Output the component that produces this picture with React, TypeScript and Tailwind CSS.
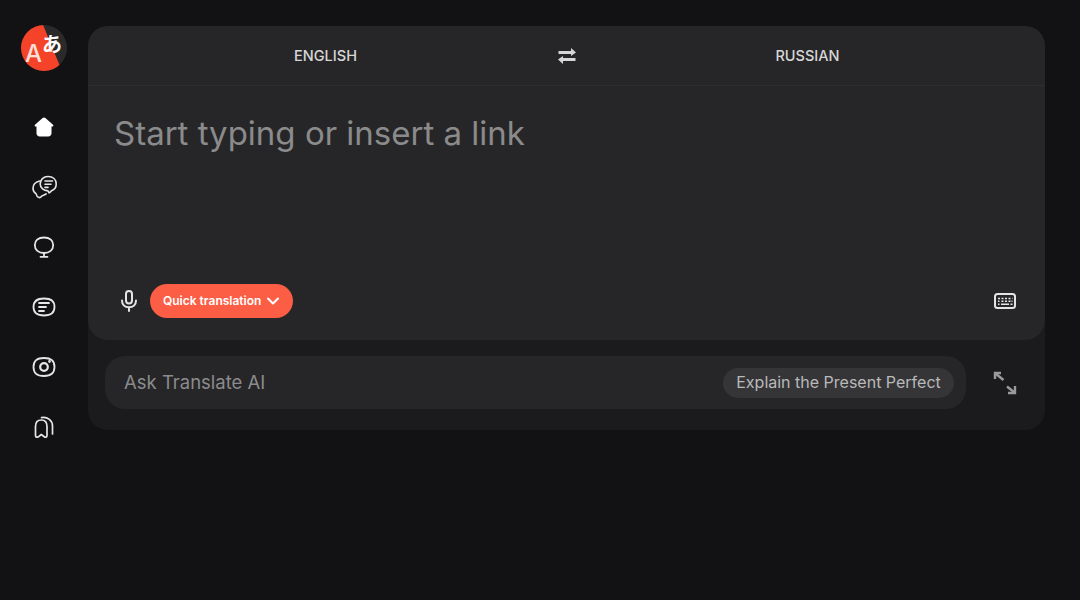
import React from 'react';
import { ChevronDown } from 'lucide-react';

const Logo = () => (
  <div className="relative w-[46px] h-[46px] rounded-full overflow-hidden bg-[#2b2a2b]">
    <div className="absolute inset-0 bg-[#f5432a] [clip-path:polygon(0_0,48%_0,89%_100%,0_100%)]" />
    <span className="absolute left-[4px] top-[15px] text-[24px] leading-[28px] text-[#fde0d8] font-medium">A</span>
    <span className="absolute left-[21px] top-[7px] text-[20px] leading-[24px] font-bold text-white [font-family:'Noto_Sans_CJK_JP',sans-serif]">あ</span>
  </div>
);

const HomeIcon = () => (
  <svg width="24" height="24" viewBox="0 0 24 24" fill="#fff">
    <path d="M12 2.600c.5 0 1 .2 1.400.5l7.600 6.600c.8.8.3 1.900-.8 1.900h-.7v6.600c0 2-1.300 3.200-3.300 3.200H7.800c-2 0-3.300-1.200-3.300-3.200v-6.600h-.7c-1.100 0-1.600-1.100-.8-1.900l7.600-6.600c.4-.3.900-.5 1.400-.5z" />
  </svg>
);

const ChatIcon = () => (
  <svg width="26" height="26" viewBox="0 0 26 26" fill="none" stroke="#e6e6e6" strokeWidth="1.600" strokeLinecap="round" strokeLinejoin="round">
    <path d="M17 2.500c5 0 8.200 3 8.200 7.500 0 3.300-2 5.700-4.700 6.700-.7 1-1.500 1.700-2.300 2.200-.6-.8-.9-1.300-1.200-2-4.200-.3-7.800-2.900-7.800-6.900 0-4.500 3.300-7.500 7.800-7.500z" />
    <path d="M8.500 7C4.500 8 2 10.800 2 14.300c0 2.300 1.100 4.200 3 5.300.4 1.800 1.400 3.400 3 3.900 1 .3 1.700-.2 2.300-1 .5-.8 1.200-1 2.200-1.300 1-.3 2-.7 2.700-1.300" />
    <path d="M14 7h7.500M14 10.200h6M14 13.400h3" />
  </svg>
);

const BulbIcon = () => (
  <svg width="24" height="24" viewBox="0 0 24 24" fill="none" stroke="#e6e6e6" strokeWidth="1.800" strokeLinecap="round" strokeLinejoin="round">
    <path d="M12 2.500c5.500 0 9.200 2.800 9.200 7.500 0 4.900-3.700 8-9.200 8s-9.200-3.100-9.200-8c0-4.700 3.700-7.500 9.200-7.500z" />
    <path d="M12 18v3.500M8.500 21.800h7" />
  </svg>
);

const DocIcon = () => (
  <svg width="24" height="24" viewBox="0 0 24 24" fill="none" stroke="#e6e6e6" strokeWidth="1.800" strokeLinecap="round">
    <path d="M12 3.500c7 0 10.500 2.500 10.500 8.500s-3.500 8.500-10.500 8.500S1.500 18 1.500 12 5 3.500 12 3.500z" />
    <path d="M7 8h10M7 12h7M7 16h5" />
  </svg>
);

const CameraIcon = () => (
  <svg width="24" height="24" viewBox="0 0 24 24" fill="none" stroke="#e6e6e6" strokeWidth="1.800" strokeLinecap="round">
    <path d="M12 3c7 0 10.500 2.800 10.500 9s-3.500 9-10.500 9S1.500 18.200 1.500 12 5 3 12 3z" />
    <circle cx="12" cy="12" r="3.800" strokeWidth="2.200" />
    <circle cx="17.500" cy="6.500" r="0.500" fill="#e6e6e6" />
  </svg>
);

const BookmarksIcon = () => (
  <svg width="24" height="24" viewBox="0 0 24 24" fill="none" stroke="#e6e6e6" strokeWidth="1.700" strokeLinecap="round" strokeLinejoin="round">
    <path d="M3.500 11.500c0-4.200 2.500-6.500 5.800-6.500s5.700 2.300 5.700 6.500v9c0 1.700-1.500 2.200-2.700 1.300l-3-2.300-3 2.300c-1.300.9-2.800.4-2.800-1.300z" />
    <path d="M9.500 2.600c6.200-1 11 3 11 8.400v8" />
  </svg>
);

const SwapIcon = () => (
  <svg width="20" height="20" viewBox="0 0 20 20" fill="#d6d6d6">
    <path d="M1.500 5h12.500V2l5 4.500-5 3.500V8H1.500z" />
    <path d="M18.500 12H6v-2l-5 3.500 5 4.500v-3h12.500z" />
  </svg>
);

const MicIcon = () => (
  <svg width="24" height="24" viewBox="0 0 24 24" fill="none" stroke="#e4e4e4" strokeWidth="2" strokeLinecap="round">
    <rect x="9" y="2" width="6" height="12.500" rx="3" />
    <path d="M5 11.500c0 4.300 3 6.800 7 6.800s7-2.500 7-6.800M12 18.300v3.700" />
  </svg>
);

const KeyboardIcon = () => (
  <svg width="24" height="18" viewBox="0 0 24 18" fill="none">
    <rect x="2" y="2" width="20" height="14" rx="2.500" stroke="#e4e4e4" strokeWidth="2" />
    <path d="M5 6.500h2M8.500 6.500h2M12 6.500h2M15.500 6.500h2M19 6.500h.5M5 9.300h1.500M8.500 9.300h2M12 9.300h2M15.500 9.300h2M18.500 9.300h1M5 12.300h1.500M8 12.300h8M17.500 12.300h2" stroke="#e4e4e4" strokeWidth="1.600" />
  </svg>
);

const ExpandIcon = () => (
  <svg width="24" height="24" viewBox="0 0 24 24" fill="none" stroke="#9a9a9a" strokeWidth="2.400">
    <path d="M2 8V2h6" />
    <path d="M2.500 2.500l8 6.500" />
    <path d="M22 15v7h-7" />
    <path d="M21.500 21.500l-7.500-6" />
  </svg>
);

const navIcons = [HomeIcon, ChatIcon, BulbIcon, DocIcon, CameraIcon, BookmarksIcon];

export default function App() {
  return (
    <div className="w-[1080px] h-[600px] bg-[#121214] flex overflow-hidden font-['Inter',sans-serif]">
      <aside className="w-[88px] shrink-0 flex flex-col items-center pt-[25px]">
        <Logo />
        <nav className="mt-[26px] flex flex-col items-center">
          {navIcons.map((Icon, i) => (
            <div key={i} className="w-[44px] h-[60px] flex items-center justify-center">
              <Icon />
            </div>
          ))}
        </nav>
      </aside>

      <main className="w-[957px] h-[404px] mt-[26px] rounded-[20px] bg-[#1b1b1d] flex flex-col">
        <section className="h-[314px] rounded-[20px] bg-[#262628] flex flex-col">
          <div className="h-[60px] shrink-0 border-b border-[#2e2e30] grid grid-cols-[241px_241px_241px] justify-center items-center text-[14.500px] font-medium text-[#d6d6d6]">
            <div className="text-center">ENGLISH</div>
            <div className="flex justify-center"><SwapIcon /></div>
            <div className="text-center">RUSSIAN</div>
          </div>
          <div className="flex-1 px-[26px] pt-[25px] text-[33px] leading-[44px] text-[#8b8b8c]">
            Start typing or insert a link
          </div>
          <div className="h-[34px] mb-[22px] pl-[29px] pr-[28px] flex items-center">
            <MicIcon />
            <button className="ml-[9px] h-[34px] w-[143px] rounded-full bg-[#fc5d45] text-white text-[12px] font-semibold flex items-center justify-start pl-[13px] gap-[2px]">
              Quick translation
              <ChevronDown size={20} strokeWidth={2.500} />
            </button>
            <div className="ml-auto"><KeyboardIcon /></div>
          </div>
        </section>
        <div className="flex items-center mt-[16px] pl-[17px]">
          <div className="w-[861px] h-[53px] rounded-[20px] bg-[#262628] flex items-center justify-between pl-[19px] pr-[12px]">
            <span className="text-[18.500px] text-[#8b8b8c]">Ask Translate AI</span>
            <span className="h-[30px] w-[231px] pb-[2px] justify-center rounded-full bg-[#353537] text-[16px] text-[#b9b9ba] flex items-center">Explain the Present Perfect</span>
          </div>
          <div className="ml-[27px]"><ExpandIcon /></div>
        </div>
      </main>
    </div>
  );
}
